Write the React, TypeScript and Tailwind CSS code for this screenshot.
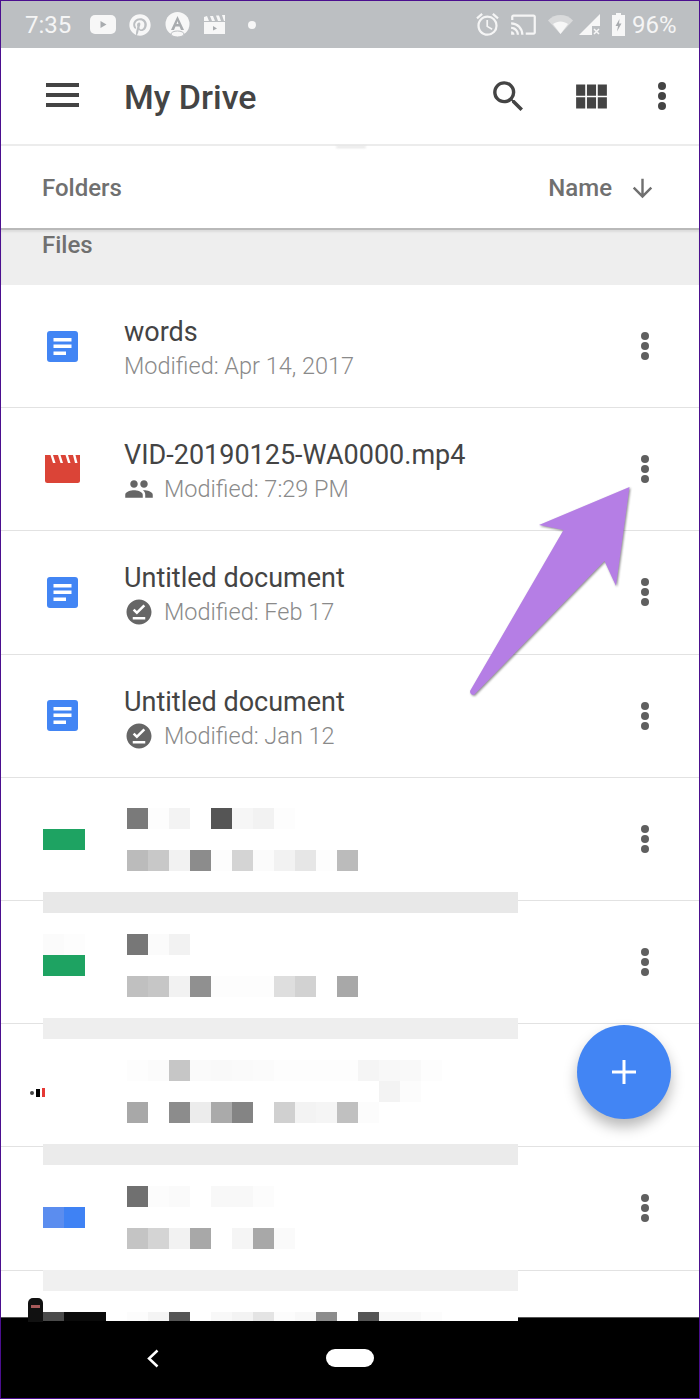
import { MdAlarm, MdArrowDownward, MdCast, MdOfflinePin, MdPeople, MdSearch, MdViewModule } from 'react-icons/md'
import { FaPinterest } from 'react-icons/fa'

const _ = ''

// redaction mosaic, one line every 21px from y=808, first cell at x=43
const mosaic: { cells?: string[]; band?: string }[] = [
  { cells: [_, _, _, _, '#7a7a7a', '#fdfdfd', '#f3f3f3', _, '#555555', '#f6f6f6', '#f2f2f2', '#fdfdfd'] },
  { cells: ['#1ea362', '#1ea362'] },
  { cells: [_, _, _, _, '#bbbbbb', '#c8c8c8', '#f2f2f2', '#8c8c8c', '#fdfdfd', '#d4d4d4', '#fbfbfb', '#f2f2f2', '#e6e6e6', '#fdfdfd', '#bbbbbb'] },
  {},
  { band: '#e8e8e8' },
  {},
  { cells: ['#fbfbfb', '#fdfdfd', _, _, '#777777', '#fbfbfb', '#f2f2f2'] },
  { cells: ['#1ea362', '#1ea362'] },
  { cells: [_, _, _, _, '#c0c0c0', '#c6c6c6', '#f2f2f2', '#909090', '#fdfdfd', '#fdfdfd', '#fdfdfd', '#dedede', '#d2d2d2', _, '#a8a8a8'] },
  {},
  { band: '#eeeeee' },
  {},
  { cells: [_, _, _, _, '#fdfdfd', '#fbfbfb', '#c6c6c6', '#fafafa', '#f9f9f9', '#fafafa', '#fbfbfb', '#fdfdfd', '#fdfdfd', '#fdfdfd', '#fdfdfd', '#f5f5f5', '#f8f8f8', '#f9f9f9', '#fdfdfd'] },
  { cells: [_, _, _, _, _, _, _, _, _, _, _, _, _, _, _, _, '#f3f3f3', '#fcfcfc'] },
  { cells: [_, _, _, _, '#a8a8a8', _, '#8c8c8c', '#ececec', '#aaaaaa', '#848484', _, '#d0d0d0', '#f3f3f3', '#f5f5f5', '#c0c0c0', '#fcfcfc'] },
  {},
  { band: '#ebebeb' },
  {},
  { cells: [_, _, _, _, '#707070', '#fcfcfc', '#fafafa', _, '#f8f8f8', '#f8f8f8', '#fcfcfc'] },
  { cells: ['#5b8def', '#3f82f4'] },
  { cells: [_, _, _, _, '#c4c4c4', '#d4d4d4', '#f2f2f2', '#a8a8a8', _, '#f5f5f5', '#a8a8a8', '#fafafa'] },
  {},
  { band: '#f0f0f0' },
  {},
  { cells: ['#4a4a4a', '#0a0a0a', '#0a0a0a', _, '#fcfcfc', '#f4f4f4', '#555555', _, '#f8f8f8', '#f3f3f3', '#e4e4e4', '#fcfcfc', '#f8f8f8', '#8c8c8c', _, '#555555', '#f8f8f8', '#f8f8f8', '#fcfcfc'] },
]

function Dots({ color = '#5f5f5f' }: { color?: string }) {
  return (
    <div className="flex flex-col gap-[2px]">
      <span className="w-[8px] h-[8px] rounded-full" style={{ background: color }} />
      <span className="w-[8px] h-[8px] rounded-full" style={{ background: color }} />
      <span className="w-[8px] h-[8px] rounded-full" style={{ background: color }} />
    </div>
  )
}

function DocIcon() {
  return (
    <svg width="31" height="31" viewBox="0 0 31 31">
      <rect width="31" height="31" rx="3" fill="#4285f4" />
      <rect x="6.5" y="7" width="18" height="3.5" fill="#fff" />
      <rect x="6.5" y="13.5" width="18" height="3.5" fill="#fff" />
      <rect x="6.5" y="20.5" width="12.5" height="3.5" fill="#fff" />
    </svg>
  )
}

function VideoIcon() {
  return (
    <svg width="35" height="28" viewBox="0 0 35 28">
      <path d="M0 0H35V25.5A2.5 2.5 0 0 1 32.500 28H2.500A2.500 2.500 0 0 1 0 25.500Z" fill="#db4437" />
      <path d="M5.500 0H8L10.500 8H8ZM13 0H15.500L18 8H15.500ZM20.500 0H23L25.500 8H23ZM28 0H30.500L32.500 8H30Z" fill="#fff" />
    </svg>
  )
}

function Row({ icon, title, sub, note }: { icon?: React.ReactNode; title?: string; sub?: string; note?: React.ReactNode }) {
  return (
    <div className="h-[123.2px] shrink-0 flex items-center border-b border-[#e2e2e2]">
      <div className="w-[123px] flex justify-center">{icon}</div>
      <div className="flex-1 pt-[6px]">
        {title && <div className="text-[27px] leading-[34px] text-[#444444]">{title}</div>}
        {sub && (
          <div className="flex items-center text-[23.500px] leading-[34px] text-[#8a8a8a] font-light">
            {note && <span className="w-[30px] mr-[10px] flex justify-center text-[#666666]">{note}</span>}
            {sub}
          </div>
        )}
      </div>
      <div className="w-[108px] flex justify-center">
        <Dots />
      </div>
    </div>
  )
}

export default function App() {
  return (
    <div className="relative w-[700px] h-[1399px] overflow-hidden flex flex-col border border-[#4b0f8f] bg-white font-['Roboto',sans-serif]">
      {/* status bar */}
      <div className="h-[47px] shrink-0 flex items-center bg-[#bcbfc2] text-[#f5f5f5]">
        <span className="ml-[24px] w-[65px] text-[24px] leading-none">7:35</span>
        <svg width="26" height="19" viewBox="0 0 26 19">
          <rect width="26" height="19" rx="5" fill="#f7f7f7" />
          <path d="M10.500 6L16.500 9.500L10.500 13Z" fill="#a9acaf" />
        </svg>
        <FaPinterest size={22} className="ml-[13px] text-[#f7f7f7]" />
        <svg width="25" height="26" viewBox="0 0 25 26" className="ml-[14px]">
          <circle cx="12.500" cy="12" r="12" fill="#f7f7f7" />
          <path d="M12.500 4L19 18H16L14.500 14.500H10.500L9 18H6ZM11.500 12H13.500L12.500 9Z" fill="#a9acaf" />
          <ellipse cx="12.500" cy="22" rx="6.500" ry="3" fill="#f7f7f7" stroke="#bcbfc2" />
        </svg>
        <svg width="21" height="19" viewBox="0 0 21 19" className="ml-[14px]">
          <path d="M0 7H21V19H0ZM0 2L3 1L5 6H0ZM6 1H9L11 6H8ZM12 .5H15L17 6H14ZM18 0H21V6H20Z" fill="#f7f7f7" />
          <path d="M9 11L13 13.500L9 15.500Z" fill="#a9acaf" />
        </svg>
        <span className="ml-[23px] w-[8px] h-[8px] rounded-full bg-[#f7f7f7]" />
        <MdAlarm size={27} className="ml-[218px]" />
        <MdCast size={27} className="ml-[9px]" />
        <svg width="25" height="19" viewBox="0 0 25 19" className="ml-[11px]">
          <path d="M0 5.500C7 -1.800 18 -1.800 25 5.500L12.500 19Z" fill="#d9dadb" />
          <path d="M5 9C9.500 5.500 15.500 5.500 20 9L12.500 19Z" fill="#f7f7f7" />
        </svg>
        <svg width="21" height="21" viewBox="0 0 21 21" className="ml-[6px]">
          <path d="M21 0V12H13V21H0Z" fill="#f7f7f7" />
          <path d="M15 15L20 20M20 15L15 20" stroke="#f7f7f7" strokeWidth="1.500" />
        </svg>
        <svg width="13" height="23" viewBox="0 0 13 23" className="ml-[12px]">
          <path d="M4 0H9V2H13V23H0V2H4Z" fill="#f7f7f7" />
          <path d="M7.500 6L3.500 13H6L5 18.500L9.500 10.500H7Z" fill="#a9acaf" />
        </svg>
        <span className="ml-[7px] text-[24px] leading-none">96%</span>
      </div>

      {/* app bar */}
      <div className="h-[98px] shrink-0 flex items-center border-b-2 border-[#ececec] text-[#444444]">
        <div className="ml-[45px] w-[33px] flex flex-col gap-[6px] mb-[2px]">
          <span className="h-[4px] bg-[#444444]" />
          <span className="h-[4px] bg-[#444444]" />
          <span className="h-[4px] bg-[#444444]" />
        </div>
        <h1 className="ml-[45px] pt-[2px] text-[34px] font-medium leading-none">My Drive</h1>
        <MdSearch size={41} className="ml-auto" />
        <MdViewModule size={41} className="ml-[42px]" />
        <div className="ml-[46px] mr-[33px]">
          <Dots color="#444444" />
        </div>
      </div>
      <span className="absolute left-[335px] top-[145px] w-[30px] h-[2px] rounded-full bg-[#e2e2e2] blur-[1px]" />

      {/* sort row */}
      <div className="h-[82px] shrink-0 flex items-center pt-[2px] text-[24px] font-medium text-[#707070]">
        <span className="ml-[41px]">Folders</span>
        <span className="ml-auto">Name</span>
        <MdArrowDownward size={29} className="ml-[16px] mr-[42px]" />
      </div>

      <div className="h-[57px] shrink-0 bg-[#eeeeee] border-t-2 border-[#b9b9b9] shadow-[inset_0_2px_2px_#dcdcdc]">
        <span className="block ml-[41px] text-[24px] leading-[30px] font-medium text-[#707070]">Files</span>
      </div>

      {/* files */}
      <Row icon={<DocIcon />} title="words" sub="Modified: Apr 14, 2017" />
      <Row icon={<VideoIcon />} title="VID-20190125-WA0000.mp4" sub="Modified: 7:29 PM" note={<MdPeople size={32} />} />
      <Row icon={<DocIcon />} title="Untitled document" sub="Modified: Feb 17" note={<MdOfflinePin size={30} />} />
      <Row icon={<DocIcon />} title="Untitled document" sub="Modified: Jan 12" note={<MdOfflinePin size={30} />} />
      <Row />
      <Row />
      <Row />
      <Row />
      <div className="flex-1 min-h-0" />

      {/* nav bar */}
      <div className="h-[81px] shrink-0 flex items-center bg-black border-t border-[#555555]">
        <svg width="12" height="19" viewBox="0 0 12 19" className="ml-[146px]">
          <path d="M10.500 1.500L2 9.500L10.500 17.500" fill="none" stroke="#fff" strokeWidth="2.500" />
        </svg>
        <span className="ml-[167px] w-[48px] h-[18px] rounded-full bg-white" />
      </div>

      {/* blurred out rows */}
      <div className="absolute left-[42px] top-[807px] w-[475px] h-[513px] overflow-hidden flex flex-col bg-white">
        {mosaic.map((line, i) => (
          <div key={i} className="h-[21px] shrink-0 flex" style={{ background: line.band }}>
            {line.cells?.map((c, j) => (
              <span key={j} className="w-[21px] h-[21px] shrink-0" style={{ background: c || undefined }} />
            ))}
          </div>
        ))}
      </div>
      <div className="absolute left-[29px] top-[1087px] flex items-center gap-[2px]">
        <span className="w-[4px] h-[4px] rounded-full bg-[#444444]" />
        <span className="w-[4px] h-[8px] bg-black" />
        <span className="w-[3px] h-[9px] bg-[#e53935]" />
      </div>
      <div className="absolute left-[27px] top-[1297px] w-[15px] h-[24px] rounded-t-[5px] bg-[#111111] overflow-hidden">
        <span className="block mt-[7px] ml-[3px] w-[9px] h-[3px] bg-[#a85a5a]" />
      </div>

      {/* fab */}
      <div className="absolute left-[576px] top-[1024px] w-[94px] h-[94px] rounded-full bg-[#4285f4] flex items-center justify-center shadow-[0_8px_14px_rgba(0,0,0,0.28)]">
        <svg width="24" height="24" viewBox="0 0 24 24">
          <path d="M12 0V24M0 12H24" stroke="#fff" strokeWidth="3" />
        </svg>
      </div>

      {/* annotation arrow */}
      <svg className="absolute left-[460px] top-[478px] drop-shadow-[1px_1px_1px_rgba(0,0,0,0.45)]" width="180" height="225" viewBox="460 478 180 225">
        <path d="M628.500 486L538 524L562.500 529L469 690Q469 694 473 694L603.500 560L615 585Z" fill="#b57ee5" />
      </svg>
    </div>
  )
}
